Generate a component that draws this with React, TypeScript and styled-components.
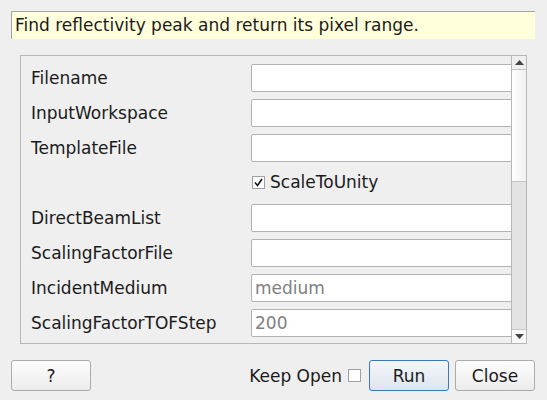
import styled, { createGlobalStyle } from 'styled-components';

const GlobalStyle = createGlobalStyle`
  html, body {
    margin: 0;
    padding: 0;
    background: #efefef;
  }
  * {
    box-sizing: border-box;
  }
`

const Dialog = styled.div`
  width: 547px;
  height: 400px;
  padding: 11px 12px 9px 11px;
  display: flex;
  flex-direction: column;
  font-family: "DejaVu Sans", "Liberation Sans", sans-serif;
  font-size: 17px;
  color: #1b1b1b;
  background: #efefef;
  overflow: hidden;
`

const Description = styled.div`
  height: 28px;
  padding: 0 0 0 3px;
  line-height: 26px;
  background: #ffffdc;
  border-top: 1px solid #a4a4a4;
  border-left: 1px solid #a4a4a4;
  white-space: nowrap;
`

const Frame = styled.div`
  margin: 16px 8px 0 9px;
  height: 289px;
  border: 1px solid #b7b7b7;
  display: flex;
`

const Content = styled.div`
  flex: 1;
  overflow: hidden;
  padding: 8px 0 0 10px;
  display: grid;
  grid-template-columns: 220px 270px;
  grid-auto-rows: 28px;
  row-gap: 7px;
  align-content: start;
`

const Label = styled.div`
  display: flex;
  align-items: center;
  white-space: nowrap;
`

const Field = styled.div<{ $placeholder?: boolean }>`
  height: 28px;
  background: #fff;
  border: 1px solid #b3b3b3;
  border-radius: 2px;
  padding-left: 3px;
  display: flex;
  align-items: center;
  color: ${p => (p.$placeholder ? '#808080' : '#1b1b1b')};
`

const CheckRow = styled.div`
  grid-column: 2;
  display: flex;
  align-items: center;
  gap: 5px;
  height: 26px;
  padding-left: 1px;
`

const Box = styled.span`
  width: 13px;
  height: 13px;
  border: 1px solid #a0a0a0;
  background: #fff;
  display: inline-flex;
  align-items: center;
  justify-content: center;
`

const ScrollBar = styled.div`
  width: 15px;
  border-left: 1px solid #b7b7b7;
  display: flex;
  flex-direction: column;
`

const Arrow = styled.div<{ $down?: boolean }>`
  height: 14px;
  background: ${p => (p.$down ? '#fafafa' : '#efefef')};
  border-top: ${p => (p.$down ? '1px solid #c4c4c4' : 'none')};
  border-bottom: ${p => (p.$down ? 'none' : '1px solid #c4c4c4')};
  display: flex;
  align-items: center;
  justify-content: center;
`

const Handle = styled.div`
  height: 112px;
  background: linear-gradient(to right, #ffffff, #f0f0f0);
  border-bottom: 1px solid #c4c4c4;
`

const Trough = styled.div`
  flex: 1;
  background: #e3e3e3;
`

const Footer = styled.div`
  margin-top: 16px;
  display: flex;
  align-items: center;
  gap: 6px;
`

const Button = styled.button<{ $default?: boolean }>`
  width: 80px;
  height: 31px;
  font: inherit;
  color: #1b1b1b;
  border-radius: 3px;
  border: 1px solid ${p => (p.$default ? '#3a78b8' : '#ababab')};
  background: ${p =>
    p.$default
      ? 'linear-gradient(#f4f7fa, #dde5ee)'
      : 'linear-gradient(#fdfdfd, #ececec)'};
  padding: 0;
`

const Spacer = styled.div`
  flex: 1;
`

const KeepOpen = styled.label`
  display: flex;
  align-items: center;
  gap: 6px;
  margin-right: 2px;
`

const rows = [
  { label: 'Filename' },
  { label: 'InputWorkspace' },
  { label: 'TemplateFile' },
]

// the last row is scrolled out of view, only its field's top edge shows
const rows2 = [
  { label: 'DirectBeamList' },
  { label: 'ScalingFactorFile' },
  { label: 'IncidentMedium', hint: 'medium' },
  { label: 'ScalingFactorTOFStep', hint: '200' },
  { label: '' },
]

const Tick = () => (
  <svg width="9" height="9" viewBox="0 0 9 9">
    <path d="M1 4.5 L3.5 7.5 L8 1" fill="none" stroke="#111" strokeWidth="1.6" />
  </svg>
)

export default function App() {
  return (
    <>
      <GlobalStyle />
      <Dialog>
        <Description>Find reflectivity peak and return its pixel range.</Description>
        <Frame>
          <Content>
            {rows.map(r => (
              <>
                <Label key={r.label}>{r.label}</Label>
                <Field />
              </>
            ))}
            <CheckRow>
              <Box><Tick /></Box>
              ScaleToUnity
            </CheckRow>
            {rows2.map(r => (
              <>
                <Label key={r.label}>{r.label}</Label>
                <Field $placeholder={!!r.hint}>{r.hint}</Field>
              </>
            ))}
          </Content>
          <ScrollBar>
            <Arrow>
              <svg width="9" height="5" viewBox="0 0 9 5"><path d="M0 5 L4.5 0 L9 5 Z" fill="#444" /></svg>
            </Arrow>
            <Handle />
            <Trough />
            <Arrow $down>
              <svg width="9" height="5" viewBox="0 0 9 5"><path d="M0 0 L4.5 5 L9 0 Z" fill="#444" /></svg>
            </Arrow>
          </ScrollBar>
        </Frame>
        <Footer>
          <Button>?</Button>
          <Spacer />
          <KeepOpen>
            Keep Open
            <Box />
          </KeepOpen>
          <Button $default>Run</Button>
          <Button>Close</Button>
        </Footer>
      </Dialog>
    </>
  )
}
